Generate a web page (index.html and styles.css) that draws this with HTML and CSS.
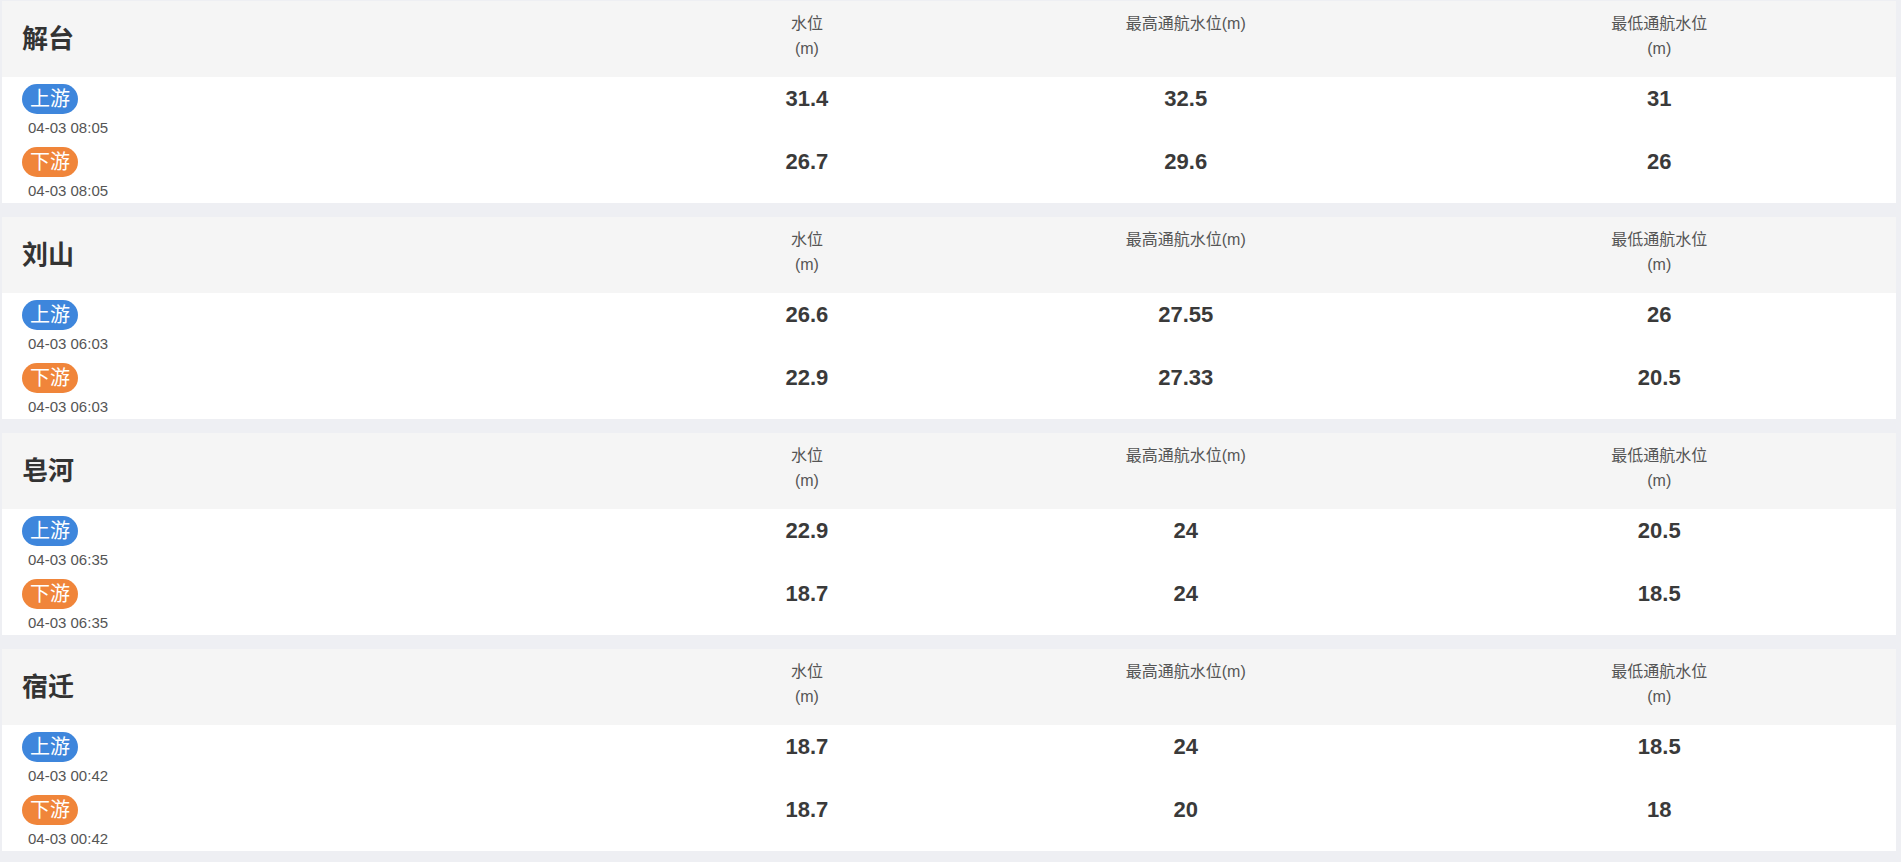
FILE: index.html
```html
<!DOCTYPE html>
<html lang="zh-CN">
<head>
<meta charset="utf-8">
<title>水位</title>
<link rel="stylesheet" href="styles.css">
</head>
<body>
<div class="page">
  <section class="card">
    <div class="card-head">
      <div class="name">解台</div>
      <div class="label">水位<br>(m)</div>
      <div class="label">最高通航水位(m)</div>
      <div class="label">最低通航水位<br>(m)</div>
    </div>
    <div class="row">
      <div class="side"><span class="badge up">上游</span><div class="time">04-03 08:05</div></div>
      <div class="val">31.4</div><div class="val">32.5</div><div class="val">31</div>
    </div>
    <div class="row">
      <div class="side"><span class="badge down">下游</span><div class="time">04-03 08:05</div></div>
      <div class="val">26.7</div><div class="val">29.6</div><div class="val">26</div>
    </div>
  </section>
  <section class="card">
    <div class="card-head">
      <div class="name">刘山</div>
      <div class="label">水位<br>(m)</div>
      <div class="label">最高通航水位(m)</div>
      <div class="label">最低通航水位<br>(m)</div>
    </div>
    <div class="row">
      <div class="side"><span class="badge up">上游</span><div class="time">04-03 06:03</div></div>
      <div class="val">26.6</div><div class="val">27.55</div><div class="val">26</div>
    </div>
    <div class="row">
      <div class="side"><span class="badge down">下游</span><div class="time">04-03 06:03</div></div>
      <div class="val">22.9</div><div class="val">27.33</div><div class="val">20.5</div>
    </div>
  </section>
  <section class="card">
    <div class="card-head">
      <div class="name">皂河</div>
      <div class="label">水位<br>(m)</div>
      <div class="label">最高通航水位(m)</div>
      <div class="label">最低通航水位<br>(m)</div>
    </div>
    <div class="row">
      <div class="side"><span class="badge up">上游</span><div class="time">04-03 06:35</div></div>
      <div class="val">22.9</div><div class="val">24</div><div class="val">20.5</div>
    </div>
    <div class="row">
      <div class="side"><span class="badge down">下游</span><div class="time">04-03 06:35</div></div>
      <div class="val">18.7</div><div class="val">24</div><div class="val">18.5</div>
    </div>
  </section>
  <section class="card">
    <div class="card-head">
      <div class="name">宿迁</div>
      <div class="label">水位<br>(m)</div>
      <div class="label">最高通航水位(m)</div>
      <div class="label">最低通航水位<br>(m)</div>
    </div>
    <div class="row">
      <div class="side"><span class="badge up">上游</span><div class="time">04-03 00:42</div></div>
      <div class="val">18.7</div><div class="val">24</div><div class="val">18.5</div>
    </div>
    <div class="row">
      <div class="side"><span class="badge down">下游</span><div class="time">04-03 00:42</div></div>
      <div class="val">18.7</div><div class="val">20</div><div class="val">18</div>
    </div>
  </section>
</div>
</body>
</html>
```

FILE: styles.css
```css
html, body {
  margin: 0;
  padding: 0;
  background: #eeeff3;
}
body {
  font-family: "Liberation Sans", "Noto Sans CJK SC", sans-serif;
  color: #333;
}
.page {
  padding: 1px 5px 0 2px;
  display: flex;
  flex-direction: column;
  gap: 14px;
}
.card {
  background: #fff;
  display: flex;
  flex-direction: column;
}
.card-head,
.row {
  display: grid;
  grid-template-columns: 35fr 15fr 25fr 25fr;
}
.card-head {
  background: #f5f5f5;
  height: 76px;
}
.name {
  align-self: center;
  padding-left: 20px;
  font-size: 26px;
  font-weight: bold;
  color: #333;
  line-height: 30px;
}
.label {
  text-align: center;
  font-size: 16px;
  line-height: 25px;
  padding-top: 10px;
  color: #555;
}
.row {
  height: 63px;
}
.side {
  padding: 7px 0 0 20px;
}
.badge {
  display: inline-block;
  height: 30px;
  line-height: 30px;
  padding: 0 8px;
  border-radius: 15px;
  color: #fff;
  font-size: 20px;
  vertical-align: top;
}
.badge.up { background: #3e86dc; }
.badge.down { background: #f0853a; }
.time {
  padding: 2px 0 0 6px;
  font-size: 15px;
  line-height: 24px;
  color: #555;
}
.val {
  text-align: center;
  padding-top: 7px;
  line-height: 30px;
  font-size: 22px;
  font-weight: bold;
  color: #3a3a3a;
}
```
